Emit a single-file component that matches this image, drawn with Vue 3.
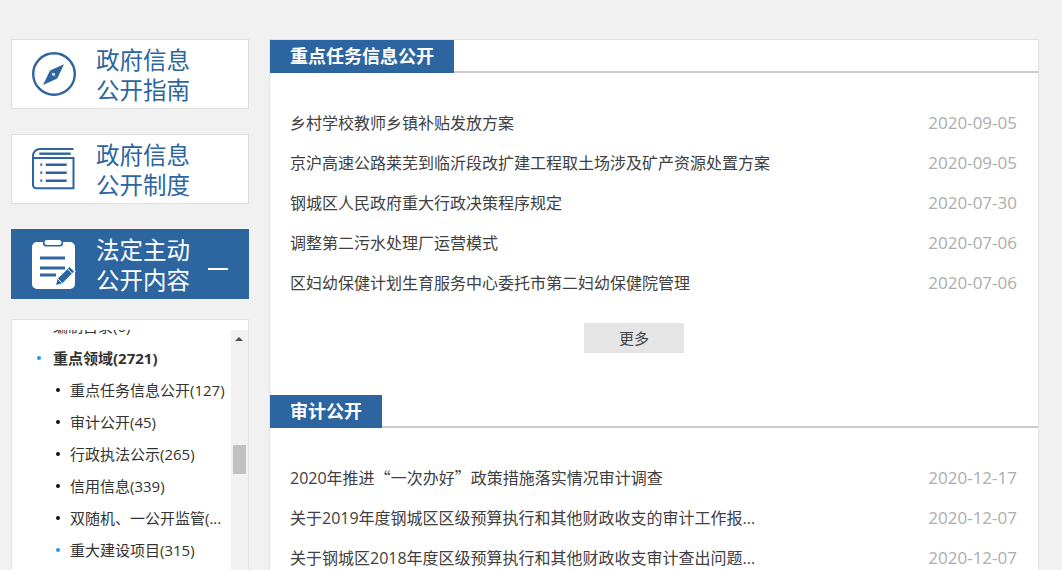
<script setup>
const navs = [
  { id: 'guide', lines: ['政府信息', '公开指南'] },
  { id: 'system', lines: ['政府信息', '公开制度'] },
  { id: 'content', lines: ['法定主动', '公开内容'], active: true },
]
const tree = [
  { t: '编制目录(6)', dot: 'blue' },
  { t: '重点领域(2721)', bold: true, dot: 'blue' },
  { t: '重点任务信息公开(127)', sub: true },
  { t: '审计公开(45)', sub: true },
  { t: '行政执法公示(265)', sub: true },
  { t: '信用信息(339)', sub: true },
  { t: '双随机、一公开监管(...', sub: true },
  { t: '重大建设项目(315)', sub: true, dot: 'blue' },
]
const sections = [
  {
    title: '重点任务信息公开',
    more: true,
    items: [
      ['乡村学校教师乡镇补贴发放方案', '2020-09-05'],
      ['京沪高速公路莱芜到临沂段改扩建工程取土场涉及矿产资源处置方案', '2020-09-05'],
      ['钢城区人民政府重大行政决策程序规定', '2020-07-30'],
      ['调整第二污水处理厂运营模式', '2020-07-06'],
      ['区妇幼保健计划生育服务中心委托市第二妇幼保健院管理', '2020-07-06'],
    ],
  },
  {
    title: '审计公开',
    items: [
      ['2020年推进“一次办好”政策措施落实情况审计调查', '2020-12-17'],
      ['关于2019年度钢城区区级预算执行和其他财政收支的审计工作报...', '2020-12-07'],
      ['关于钢城区2018年度区级预算执行和其他财政收支审计查出问题...', '2020-12-07'],
    ],
  },
]
const parts = (name) => name.split(/([“”])/).filter(Boolean)
</script>

<template>
  <div class="page">
    <aside class="side">
      <a v-for="n in navs" :key="n.id" class="nav" :class="{ active: n.active }">
        <span class="ico">
          <svg v-if="n.id === 'guide'" width="46" height="46" viewBox="0 0 46 46">
            <circle cx="23" cy="23" r="20.8" fill="none" stroke="#2c659f" stroke-width="2.4" />
            <path d="M33 13.2 L26.3 27.5 L19 19.6 Z" fill="#2c659f" />
            <path d="M12 34 L19 19.6 L26.3 27.5 Z" fill="#2c659f" />
            <circle cx="22.5" cy="23.3" r="1.4" fill="#fff" />
          </svg>
          <svg v-else-if="n.id === 'system'" width="44" height="46" viewBox="0 0 44 46">
            <path d="M41.5 3H8A7 7 0 0 0 1 10V39A3.3 3.3 0 0 0 4.3 42.3H41.5V12H2" fill="none" stroke="#2c659f" stroke-width="2" />
            <path d="M7.3 7.7H38.7" stroke="#2c659f" stroke-width="2.4" />
            <path d="M13.7 18.7H34.7M13.7 26.7H34.7M13.7 34.7H34.7" stroke="#2c659f" stroke-width="2.4" />
            <path d="M8.3 18.7H10.3M8.3 26.7H10.3M8.3 34.7H10.3" stroke="#2c659f" stroke-width="2.2" />
          </svg>
          <svg v-else width="44" height="50" viewBox="0 0 44 50">
            <rect x="0" y="3" width="43" height="47" rx="5" fill="#fff" />
            <rect x="11" y="-1" width="20" height="8.5" rx="3" fill="#2c659f" />
            <rect x="12.5" y="1" width="17" height="5" rx="2.5" fill="#fff" />
            <path d="M8 19H33M8 29H33M8 36H24" stroke="#2c659f" stroke-width="3" />
            <path d="M23 47L25 39.5L37.5 27L43 32.5L30.5 45Z" fill="#2c659f" stroke="#fff" stroke-width="1.4" stroke-linejoin="round" />
            <path d="M35.2 29.5L40.7 35M26 40L30 44" stroke="#fff" stroke-width="1" />
          </svg>
        </span>
        <span class="nav-text"><span v-for="l in n.lines" :key="l">{{ l }}</span></span>
        <i v-if="n.active" class="minus"></i>
      </a>

      <div class="tree">
        <ul class="tree-list">
          <li v-for="row in tree" :key="row.t" :class="{ sub: row.sub, bold: row.bold, blue: row.dot === 'blue' }">{{ row.t }}</li>
        </ul>
        <div class="bar">
          <i class="arrow"></i>
          <i class="thumb"></i>
        </div>
      </div>
    </aside>

    <main class="panel">
      <section v-for="s in sections" :key="s.title" class="sec">
        <header class="sec-head"><h2>{{ s.title }}</h2></header>
        <ul class="rows">
          <li v-for="it in s.items" :key="it[0]">
            <span class="name"><span v-for="(p, i) in parts(it[0])" :key="i" :class="{ q: p === '“' || p === '”' }">{{ p }}</span></span>
            <span class="date">{{ it[1] }}</span>
          </li>
        </ul>
        <div v-if="s.more" class="more-wrap"><button class="more">更多</button></div>
      </section>
    </main>
  </div>
</template>

<style>
html, body { margin: 0; background: #f1f1f1; overflow: hidden; }
</style>

<style scoped>
.page {
  box-sizing: border-box;
  height: 570px;
  overflow: hidden;
  padding: 39px 23px 0 11px;
  display: flex;
  align-items: flex-start;
  gap: 20px;
  background: #f1f1f1;
  font-family: "Open Sans", "Noto Sans CJK SC", sans-serif;
  color: #333;
}
.side {
  width: 238px;
  flex: none;
  display: flex;
  flex-direction: column;
}
.nav {
  box-sizing: border-box;
  height: 70px;
  margin-bottom: 25px;
  background: #fff;
  border: 1px solid #dedede;
  display: flex;
  align-items: center;
  color: #2c659f;
}
.nav.active {
  background: #2c659f;
  border-color: #2c659f;
  color: #fff;
  margin-bottom: 20px;
}
.ico {
  width: 84px;
  flex: none;
  display: flex;
  justify-content: center;
}
.ico svg { overflow: visible; }
.nav-text {
  display: flex;
  flex-direction: column;
  font-size: 23.5px;
  line-height: 30px;
  padding-top: 2px;
}
.minus {
  width: 20px;
  height: 2px;
  background: #fff;
  margin: 10px 0 0 18px;
}
.tree {
  box-sizing: border-box;
  height: 300px;
  position: relative;
  background: #fff;
  border: 1px solid #e4e4e4;
  padding-top: 10px;
  overflow: hidden;
}
.tree-list {
  list-style: none;
  margin: -20px 0 0;
  padding: 0;
  height: 100%;
  clip-path: inset(20px 0 0 0);
}
.tree-list li {
  height: 32px;
  line-height: 32px;
  font-size: 15px;
  padding-left: 41px;
  position: relative;
  white-space: nowrap;
}
.tree-list li::before {
  content: "";
  position: absolute;
  left: 25px;
  top: 14px;
  width: 4px;
  height: 4px;
  border-radius: 50%;
  background: #2196f3;
}
.tree-list li.sub { padding-left: 58px; }
.tree-list li.sub::before { left: 44px; background: #111; }
.tree-list li.sub.blue::before { background: #2196f3; }
.tree-list li.bold { font-weight: 700; }
.bar {
  position: absolute;
  top: 10px;
  right: 0;
  bottom: 0;
  width: 17px;
  background: #f1f1f1;
}
.arrow {
  position: absolute;
  left: 4px;
  top: 7px;
  border: 4px solid transparent;
  border-top: 0;
  border-bottom: 4px solid #505050;
  width: 0;
  height: 0;
}
.thumb {
  position: absolute;
  left: 2px;
  top: 115px;
  width: 13px;
  height: 29px;
  background: #c1c1c1;
}
.panel {
  box-sizing: border-box;
  width: 770px;
  flex: none;
  height: 600px;
  background: #fff;
  border: 1px solid #e1e1e1;
}
.sec-head {
  height: 33px;
  border-bottom: 2px solid #ccc;
  box-sizing: border-box;
}
.sec-head h2 {
  display: inline-block;
  margin: 0;
  height: 33px;
  line-height: 33px;
  padding: 0 20px;
  background: #2c659f;
  color: #fff;
  font-size: 18px;
  font-weight: 700;
}
.rows {
  list-style: none;
  margin: 0;
  padding: 30px 21px 0 20px;
}
.rows li {
  height: 40px;
  line-height: 40px;
  display: flex;
  justify-content: space-between;
  font-size: 16px;
  color: #404040;
}
.q { font-family: "Noto Sans CJK SC", sans-serif; line-height: 1; }
.date {
  font-size: 17px;
  color: #adadad;
}
.more-wrap {
  display: flex;
  justify-content: center;
  padding: 20px 40px 0 0;
  margin-bottom: 42px;
}
.more {
  width: 100px;
  height: 30px;
  border: 0;
  padding: 0 0 2px;
  background: #e5e5e5;
  color: #444;
  font: inherit;
  font-size: 15px;
}
</style>
